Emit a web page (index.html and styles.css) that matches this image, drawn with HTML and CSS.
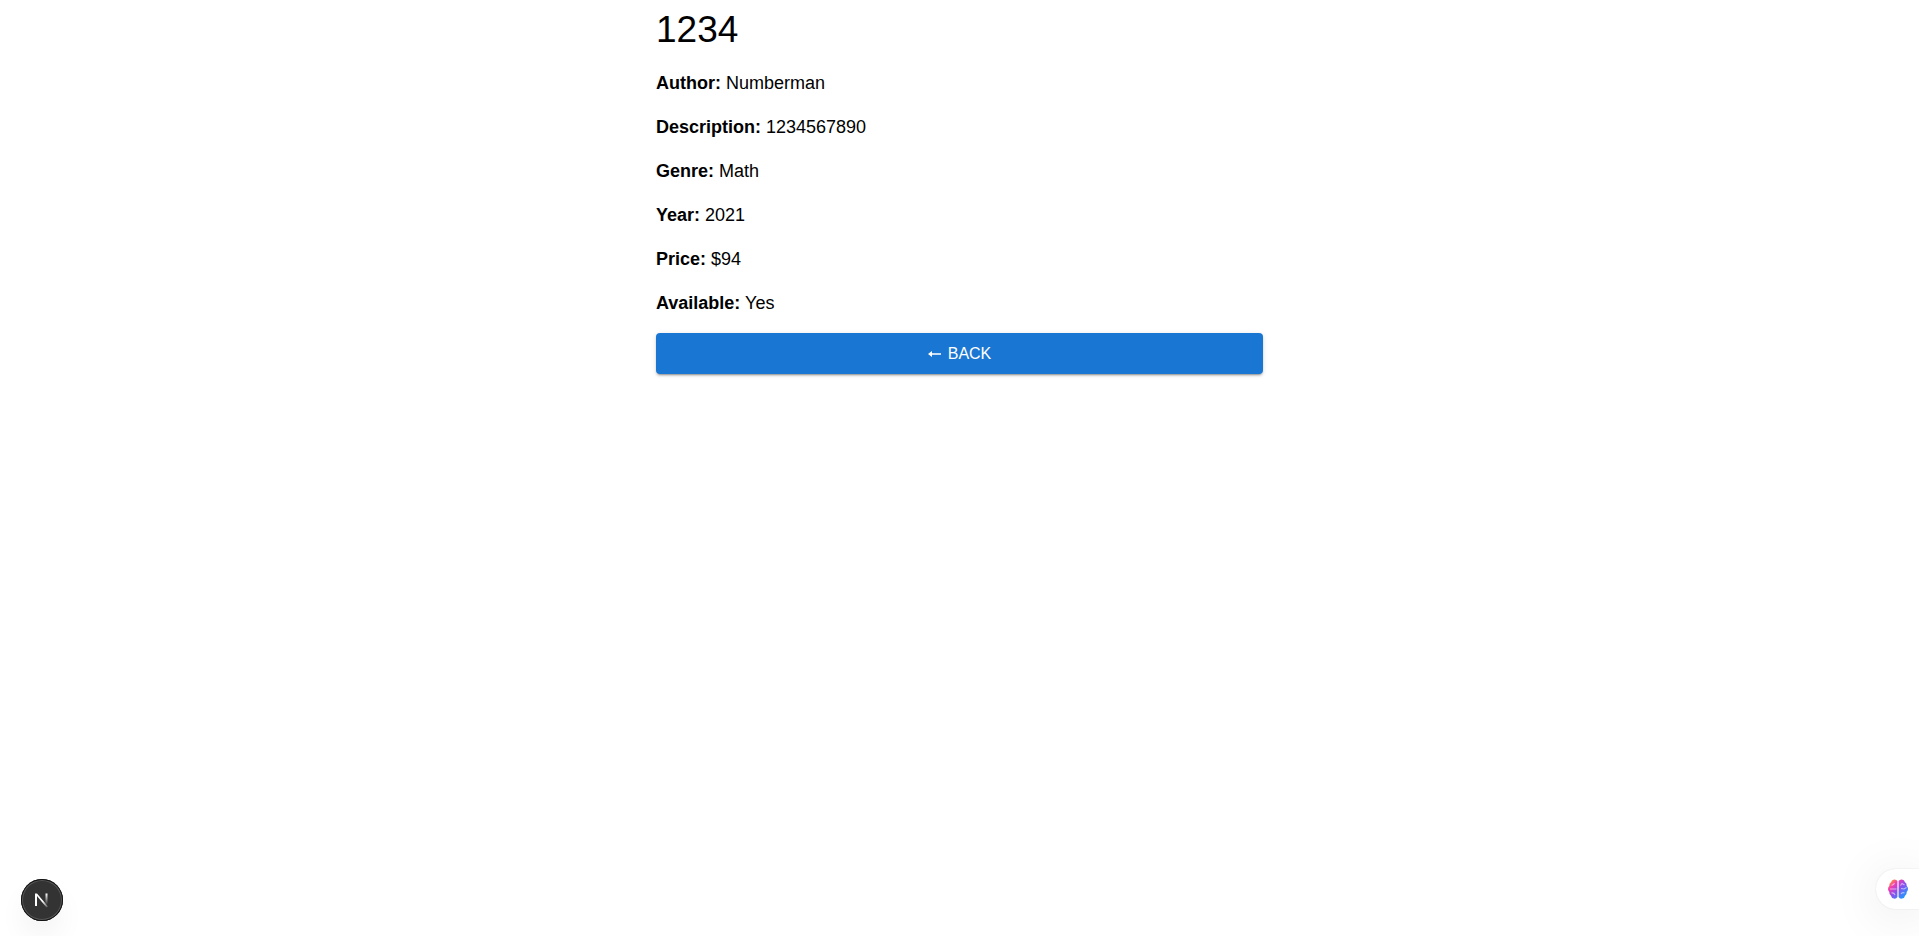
FILE: index.html
```html
<!DOCTYPE html>
<html lang="en">
<head>
  <meta charset="utf-8">
  <meta name="viewport" content="width=device-width, initial-scale=1">
  <title>1234</title>
  <link rel="stylesheet" href="styles.css">
</head>
<body>
  <main class="book">
    <h1 class="book-title">1234</h1>
    <p class="book-field"><strong>Author:</strong> Numberman</p>
    <p class="book-field"><strong>Description:</strong> 1234567890</p>
    <p class="book-field"><strong>Genre:</strong> Math</p>
    <p class="book-field"><strong>Year:</strong> 2021</p>
    <p class="book-field"><strong>Price:</strong> $94</p>
    <p class="book-field"><strong>Available:</strong> Yes</p>
    <button class="back-button" type="button">
      <svg class="back-arrow" viewBox="0 0 13 8" aria-hidden="true">
        <path d="M0 4 4 1V3.2H13V4.8H4V7Z" fill="currentColor"/>
      </svg>
      Back
    </button>
  </main>

  <button class="dev-badge" type="button" aria-label="Open dev tools">
    <svg viewBox="0 0 42 42" aria-hidden="true">
      <defs>
        <linearGradient id="n-diagonal" gradientUnits="userSpaceOnUse" x1="22" y1="22" x2="27" y2="28">
          <stop stop-color="#fff"/>
          <stop offset="1" stop-color="#fff" stop-opacity="0.15"/>
        </linearGradient>
        <linearGradient id="n-stem" x1="0" y1="0" x2="0" y2="1">
          <stop stop-color="#fff"/>
          <stop offset="1" stop-color="#fff" stop-opacity="0"/>
        </linearGradient>
      </defs>
      <path d="M14 14.5H16L27 27.5 25.5 28.5 16 17V27H14Z" fill="url(#n-diagonal)"/>
      <rect x="24.5" y="14.5" width="2" height="11" fill="url(#n-stem)"/>
    </svg>
  </button>

  <button class="assistant-tab" type="button" aria-label="Open assistant">
    <svg class="assistant-icon" viewBox="0 0 20 20" aria-hidden="true">
      <defs>
        <linearGradient id="brain" gradientUnits="userSpaceOnUse" x1="2" y1="2" x2="17" y2="18">
          <stop stop-color="#ff9a2e"/>
          <stop offset="0.25" stop-color="#f03bb4"/>
          <stop offset="0.55" stop-color="#8a50ee"/>
          <stop offset="1" stop-color="#1c9cff"/>
        </linearGradient>
      </defs>
      <path d="M9.4 2V18Q8.3 20 6 19.6 3.5 19.5 3 16.8 1 15.5 1.3 13 0 11.5 0 10 0 8 1.3 7 1 4.5 3 3.2 3.8.4 6.2.4 8.6.3 9.4 2ZM10.6 2V18Q11.7 20 14 19.6 16.5 19.5 17 16.8 19 15.5 18.7 13 20 11.5 20 10 20 8 18.7 7 19 4.5 17 3.2 16.2.4 13.8.4 11.4.3 10.6 2Z" fill="url(#brain)"/>
      <path d="M3.5 6Q5.5 6.5 6.5 4M2 10H8.5M3.5 14Q6 13.5 7 16M12.5 6.5 14 4.5 16.5 6M13 9.5 16 10 18.5 8.5M13 15Q14 13 16.5 14" fill="none" stroke="#fff" stroke-opacity="0.55" stroke-width="1.1"/>
    </svg>
  </button>
</body>
</html>
```
FILE: styles.css
```css
body {
  margin: 0;
  background: #fff;
  color: #000;
  font-family: Arial, "Liberation Sans", sans-serif;
}

.book {
  display: flex;
  flex-direction: column;
  gap: 16px;
  max-width: 607px;
  margin: 0 auto;
  padding: 7px 0;
}

.book-title {
  margin: 0;
  font-size: 37px;
  font-weight: 400;
  line-height: 46px;
}

.book-field {
  margin: 0;
  font-size: 18px;
  line-height: 28px;
}

.back-button {
  display: flex;
  align-items: center;
  justify-content: center;
  gap: 7px;
  padding: 6px 18px;
  border: 0;
  border-radius: 4px;
  background: #1976d2;
  box-shadow: 0 3px 1px -2px rgba(0, 0, 0, 0.2), 0 2px 2px rgba(0, 0, 0, 0.14), 0 1px 5px rgba(0, 0, 0, 0.12);
  color: #fff;
  font-family: inherit;
  font-size: 16px;
  line-height: 29px;
  text-transform: uppercase;
  cursor: pointer;
}

.back-arrow {
  width: 13px;
  height: 8px;
}

.dev-badge {
  position: fixed;
  bottom: 15px;
  left: 21px;
  width: 42px;
  height: 42px;
  padding: 0;
  border: 0;
  border-radius: 50%;
  background: #333;
  box-shadow: inset 0 0 0 1px #111, inset 0 0 0 2px #555, 0 16px 32px -8px rgba(0, 0, 0, 0.12);
}

.dev-badge svg {
  display: block;
}

.assistant-tab {
  display: flex;
  align-items: center;
  position: fixed;
  right: 0;
  bottom: 27px;
  height: 40px;
  padding: 0 11px 0 12px;
  border: 0;
  border-radius: 20px 0 0 20px;
  background: #fff;
  box-shadow: 0 0 2px rgba(0, 0, 0, 0.12), 0 6px 50px rgba(0, 0, 0, 0.1);
}

.assistant-icon {
  width: 20px;
  height: 20px;
}
```
